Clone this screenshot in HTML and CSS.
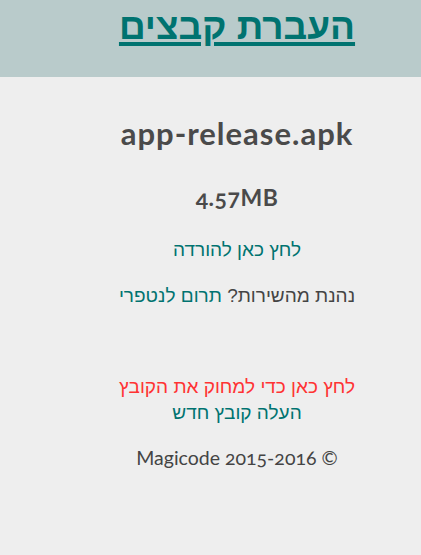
FILE: index.html
```html
<!DOCTYPE html>
<html lang="he" dir="rtl">
<head>
  <meta charset="UTF-8">
  <meta name="viewport" content="width=device-width, initial-scale=1.0">
  <title>העברת קבצים</title>
  <link rel="stylesheet" href="styles.css">
</head>
<body>
  <div class="header">
    <h1><a href="#">העברת קבצים</a></h1>
  </div>

  <div class="content">
    <h2 class="file-name" dir="ltr">app-release.apk</h2>
    <h3 class="file-size" dir="ltr">4.57MB</h3>

    <p class="download"><a href="#">לחץ כאן להורדה</a></p>
    <p class="donate">נהנת מהשירות? <a href="#">תרום לנטפרי</a></p>

    <div class="actions">
      <a href="#" class="delete">לחץ כאן כדי למחוק את הקובץ</a>
      <a href="#" class="upload">העלה קובץ חדש</a>
    </div>

    <p class="footer" dir="ltr">Magicode 2015-2016 ©</p>
  </div>
</body>
</html>
```

FILE: styles.css
```css
body {
  font-family: Lato, 'Liberation Sans', sans-serif;
  font-variant-numeric: oldstyle-nums;
  background-color: #eeeeee;
  color: #444444;
  margin: 0;
  padding: 0;
  text-align: center;
}
a {
  color: #007370;
  text-decoration: none;
}
.header {
  background-color: #b9cbcb;
  height: 77px;
  padding-left: 53px;
}
.header h1 {
  margin: 0;
  padding-top: 6px;
  font-family: 'Liberation Sans', sans-serif;
  font-size: 37px;
  font-weight: bold;
  line-height: 42px;
}
.header h1 a {
  text-decoration: underline;
  text-decoration-thickness: 4px;
  text-underline-offset: 3px;
}
.content {
  padding-left: 53px;
}
.file-name {
  margin: 38px 0 0;
  font-size: 31px;
  font-weight: bold;
  line-height: 36px;
  letter-spacing: 1px;
  color: #4a4a4a;
}
.file-size {
  margin: 32px 0 0;
  font-size: 23px;
  font-weight: bold;
  line-height: 28px;
  letter-spacing: 0.5px;
  color: #4a4a4a;
}
.download,
.donate {
  margin: 0;
  font-family: 'Liberation Sans', sans-serif;
  font-size: 19px;
  line-height: 22px;
}
.download {
  margin-top: 28px;
}
.donate {
  margin-top: 24px;
}
.actions {
  margin-top: 67px;
  font-family: 'Liberation Sans', sans-serif;
  font-size: 19px;
  line-height: 26px;
}
.actions a {
  display: block;
}
.actions .delete {
  color: #ff3333;
}
.footer {
  margin: 20px 0 0;
  font-size: 19.5px;
  line-height: 24px;
}
```
